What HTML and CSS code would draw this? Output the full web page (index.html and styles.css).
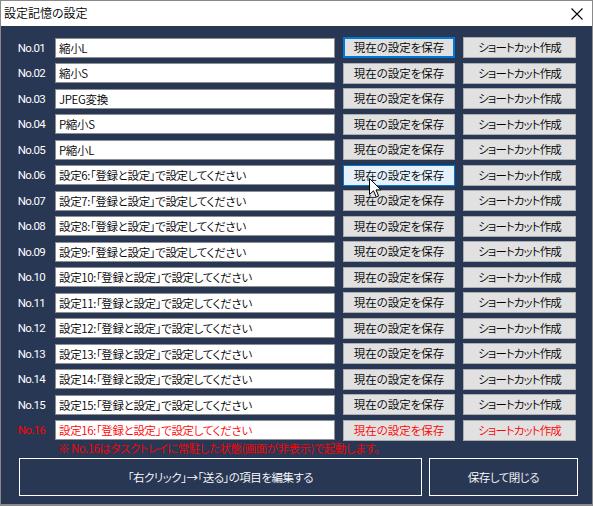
FILE: index.html
```html
<!DOCTYPE html>
<html lang="ja">
<head>
<meta charset="utf-8">
<title>設定記憶の設定</title>
<link rel="stylesheet" href="styles.css">
</head>
<body>
<div class="window">
  <div class="titlebar">
    <span class="title">設定記憶の設定</span>
    <svg class="close" width="12" height="12" viewBox="0 0 12 12"><path d="M0.5 0.5 L11.5 11.5 M11.5 0.5 L0.5 11.5" stroke="#000" stroke-width="1.1" fill="none"/></svg>
  </div>
  <div class="body">
    <div class="rows">
      <div class="row"><span class="label">No.01</span><div class="field">縮小L</div><div class="btn save focus">現在の設定を保存</div><div class="btn sc">ショートカット作成</div></div>
      <div class="row"><span class="label">No.02</span><div class="field">縮小S</div><div class="btn save">現在の設定を保存</div><div class="btn sc">ショートカット作成</div></div>
      <div class="row"><span class="label">No.03</span><div class="field">JPEG変換</div><div class="btn save">現在の設定を保存</div><div class="btn sc">ショートカット作成</div></div>
      <div class="row"><span class="label">No.04</span><div class="field">P縮小S</div><div class="btn save">現在の設定を保存</div><div class="btn sc">ショートカット作成</div></div>
      <div class="row"><span class="label">No.05</span><div class="field">P縮小L</div><div class="btn save">現在の設定を保存</div><div class="btn sc">ショートカット作成</div></div>
      <div class="row"><span class="label">No.06</span><div class="field">設定6:「登録と設定」で設定してください</div><div class="btn save hover">現在の設定を保存</div><div class="btn sc">ショートカット作成</div></div>
      <div class="row"><span class="label">No.07</span><div class="field">設定7:「登録と設定」で設定してください</div><div class="btn save">現在の設定を保存</div><div class="btn sc">ショートカット作成</div></div>
      <div class="row"><span class="label">No.08</span><div class="field">設定8:「登録と設定」で設定してください</div><div class="btn save">現在の設定を保存</div><div class="btn sc">ショートカット作成</div></div>
      <div class="row"><span class="label">No.09</span><div class="field">設定9:「登録と設定」で設定してください</div><div class="btn save">現在の設定を保存</div><div class="btn sc">ショートカット作成</div></div>
      <div class="row"><span class="label">No.10</span><div class="field">設定10:「登録と設定」で設定してください</div><div class="btn save">現在の設定を保存</div><div class="btn sc">ショートカット作成</div></div>
      <div class="row"><span class="label">No.11</span><div class="field">設定11:「登録と設定」で設定してください</div><div class="btn save">現在の設定を保存</div><div class="btn sc">ショートカット作成</div></div>
      <div class="row"><span class="label">No.12</span><div class="field">設定12:「登録と設定」で設定してください</div><div class="btn save">現在の設定を保存</div><div class="btn sc">ショートカット作成</div></div>
      <div class="row"><span class="label">No.13</span><div class="field">設定13:「登録と設定」で設定してください</div><div class="btn save">現在の設定を保存</div><div class="btn sc">ショートカット作成</div></div>
      <div class="row"><span class="label">No.14</span><div class="field">設定14:「登録と設定」で設定してください</div><div class="btn save">現在の設定を保存</div><div class="btn sc">ショートカット作成</div></div>
      <div class="row"><span class="label">No.15</span><div class="field">設定15:「登録と設定」で設定してください</div><div class="btn save">現在の設定を保存</div><div class="btn sc">ショートカット作成</div></div>
      <div class="row red"><span class="label">No.16</span><div class="field">設定16:「登録と設定」で設定してください</div><div class="btn save">現在の設定を保存</div><div class="btn sc">ショートカット作成</div></div>
    </div>
    <div class="note">※ No.16はタスクトレイに常駐した状態(画面が非表示)で起動します。</div>
    <div class="actions">
      <div class="action wide">「右クリック」→「送る」の項目を編集する</div>
      <div class="action narrow">保存して閉じる</div>
    </div>
  </div>
  <svg class="cursor" width="13" height="20" viewBox="0 0 13 20"><path d="M0.5 0.5 L0.5 16.5 L4.5 12.8 L7.2 19 L9.6 18 L7 11.9 L12 11.9 Z" fill="#fff" stroke="#000" stroke-width="1" stroke-linejoin="miter"/></svg>
</div>
</body>
</html>
```
FILE: styles.css
```css
* { box-sizing: border-box; }
html, body { margin: 0; padding: 0; }
body {
  width: 593px;
  height: 506px;
  overflow: hidden;
  font-family: "Noto Sans CJK JP", "Noto Sans", sans-serif;
  font-size: 11.5px;
  font-weight: 350;
  font-feature-settings: "palt";
}
.window {
  position: relative;
  width: 593px;
  height: 506px;
  border: 1px solid #8a8a8a;
  border-bottom-width: 2px;
  display: flex;
  flex-direction: column;
  background: #283753;
}
.titlebar {
  height: 25px;
  background: #fff;
  display: flex;
  align-items: center;
  justify-content: space-between;
  padding: 0 9px 0 3px;
  flex: none;
}
.title { color: #000; font-size: 12px; line-height: 1; margin-top: -1px; }
.close { display: block; margin-top: 1px; }
.body {
  flex: 1;
  display: flex;
  flex-direction: column;
  padding: 11px 0 0 0;
}
.rows {
  display: flex;
  flex-direction: column;
  gap: 4.53px;
}
.row {
  display: grid;
  grid-template-columns: 46px 280px 112px 113px;
  column-gap: 8px;
  height: 21px;
  align-items: center;
}
.label {
  color: #fff;
  text-align: right;
  font-family: "Roboto", "Noto Sans", sans-serif;
  font-size: 11.5px;
  font-weight: 400;
  letter-spacing: -0.7px;
  padding-right: 2px;
}
.field {
  height: 20px;
  background: #fff;
  border: 1px solid #8f8f8f;
  color: #000;
  padding: 0 0 0 3px;
  line-height: 18px;
  letter-spacing: -0.35px;
  white-space: nowrap;
  overflow: hidden;
}
.btn {
  height: 21px;
  background: #e1e1e1;
  border: 1px solid #adadad;
  color: #000;
  text-align: center;
  line-height: 19px;
  white-space: nowrap;
}
.btn.sc { letter-spacing: -0.9px; }
.btn.focus { border: 2px solid #0078d7; line-height: 17px; }
.btn.hover { background: #e5f1fb; border-color: #0078d7; }
.row.red .label, .row.red .field, .row.red .btn { color: #ff0000; }
.note {
  color: #ff0000;
  padding-left: 57px;
  height: 17px;
  line-height: 15px;
  letter-spacing: -0.5px;
  white-space: nowrap;
}
.actions {
  display: flex;
  gap: 7px;
  padding-left: 18px;
}
.action {
  height: 38px;
  border: 1px solid #fff;
  color: #fff;
  display: flex;
  align-items: center;
  justify-content: center;
  letter-spacing: -0.5px;
}
.action.wide { width: 403px; }
.action.narrow { width: 149px; }
.cursor {
  position: absolute;
  left: 368px;
  top: 177px;
}
```
